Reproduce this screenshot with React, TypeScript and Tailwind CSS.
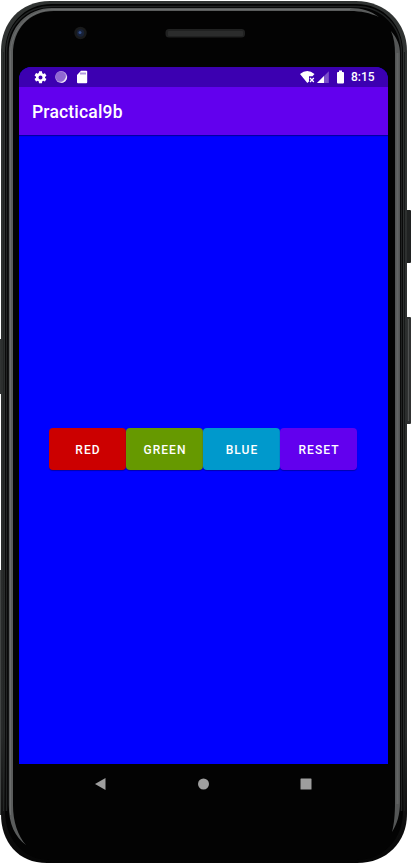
import React from "react";

function PhoneFrame() {
  return (
    <svg className="pointer-events-none absolute inset-0" width="411" height="863" viewBox="0 0 411 863" aria-hidden="true">
      <g fill="#303332">
        <rect x="0" y="339" width="3" height="55" />
        <rect x="0" y="570" width="3" height="245" fill="#414443" />
        <rect x="405" y="210" width="6" height="53" rx="1" fill="#202222" />
        <rect x="405" y="317" width="6" height="107" rx="1" fill="#303232" />
        <rect x="408" y="319" width="1" height="102" fill="#505252" />
      </g>
      <defs>
        <linearGradient id="rim" x1="0" y1="0" x2="0" y2="1">
          <stop offset="0" stopColor="#303332" />
          <stop offset="0.85" stopColor="#282a2a" />
          <stop offset="0.94" stopColor="#111" />
          <stop offset="1" stopColor="#050505" />
        </linearGradient>
      </defs>
      <path d="M1 51C1 23 20 1 50 1H356C386 1 407 23 407 51V814C407 842 387 863 357 863H47C18 863 1 842 1 814Z" fill="url(#rim)" />
      <path d="M5 53C5 25 24 4 52 4H356C384 4 403 25 403 53V811C403 839 384 860 356 860H50C23 860 5 839 5 811Z" fill="#030303" />
      <path d="M6.5 811V53C6.5 26 25 6.5 52 6.5H356C382 6.5 401.5 26 401.5 53V811" fill="none" stroke="#202222" strokeWidth="1.5" />
      <path d="M8.8 805V53C9 27 27 8 52 8H350C362 8 371 11 379 17C370 13 361 11 350 11H54C29 11 13 29 13 54V805C13 822 18 836 26 845C15 837 8.8 824 8.8 805Z" fill="#5a5c5c" />
      <path d="M10.5 815V55C10.5 29 29 9.5 54 9.5H350" fill="none" stroke="#6c6e6e" />
      <path d="M391 31C397 38 400 45 400 54V802C400 815 397 824 392 832C394 824 395 815 395 802V54C395 45 394 38 391 31Z" fill="#545656" />
      <path d="M397.5 53V804" stroke="#626464" strokeWidth="2" />
      <path d="M404.5 52V811" stroke="#171919" />
      <path d="M3.5 52V811" stroke="#222524" />
      <circle cx="80.5" cy="33" r="6.2" fill="#191a1b" />
      <circle cx="80.5" cy="33" r="3.7" fill="#172137" />
      <circle cx="80" cy="32.4" r="1.5" fill="#344e88" />
      <rect x="165.5" y="29" width="79.5" height="8.5" rx="3.5" fill="#202121" />
      <rect x="168" y="31" width="75" height="5" rx="1" fill="#2b2c2c" />
    </svg>
  );
}

function StatusBar() {
  return (
    <div className="flex h-5 shrink-0 items-center bg-[#3c00b1] pl-[14px] pr-[13px] text-white">
      <svg width="15" height="15" viewBox="0 0 24 24" fill="currentColor">
        <path fillRule="evenodd" d="M19.14 12.94c.04-.3.06-.61.06-.94s-.02-.64-.07-.94l2.03-1.58a.5.5 0 0 0 .12-.61l-1.92-3.32a.49.49 0 0 0-.59-.22l-2.39.96a7 7 0 0 0-1.62-.94l-.36-2.54A.48.48 0 0 0 13.92 2h-3.84a.48.48 0 0 0-.48.41l-.36 2.54c-.59.24-1.13.57-1.62.94l-2.39-.96a.48.48 0 0 0-.59.22L2.72 8.47a.48.48 0 0 0 .12.61l2.03 1.58a6 6 0 0 0-.02 1.88l-2.03 1.58a.5.5 0 0 0-.12.61l1.92 3.32c.12.22.37.29.59.22l2.39-.96c.5.38 1.03.7 1.62.94l.36 2.54c.05.24.24.41.48.41h3.84c.24 0 .44-.17.48-.41l.36-2.54a7 7 0 0 0 1.62-.94l2.39.96c.22.08.47 0 .59-.22l1.92-3.32a.48.48 0 0 0-.12-.61zM12 15.2A3.2 3.2 0 1 1 12 8.8a3.2 3.2 0 0 1 0 6.4Z" />
      </svg>
      <svg className="ml-[6px]" width="14" height="14" viewBox="0 0 14 14">
        <circle cx="7.2" cy="7" r="6" fill="#b79ae2" />
        <circle cx="6.7" cy="6.6" r="5" fill="#9068d2" />
        <path d="M12.8 5A6 6 0 0 1 6 12.7Q11 11.5 12.8 5Z" fill="#eee5f8" />
      </svg>
      <svg className="ml-[9px]" width="11" height="14" viewBox="0 0 11 14" fill="white">
        <path d="M4 .8H9.2Q10.2 .8 10.2 1.8V12.2Q10.2 13.2 9.2 13.2H1Q0 13.2 0 12.2V5Z" />
        <path d="M4 2.5V4.5M6 2.5V4.5M8 2.5V4.5" stroke="#3c00b1" strokeWidth=".8" />
      </svg>
      <svg className="ml-auto" width="17" height="14" viewBox="0 0 17 14" fill="white">
        <path d="M0 4Q7.2-1.8 14.5 4L12.5 6.3H9V11.5L7.3 13Z" />
        <path d="m10 8 3.8 4m0-4-3.8 4" stroke="white" strokeWidth="1.3" />
      </svg>
      <svg width="12" height="14" viewBox="0 0 12 14">
        <path d="M0 13 11.8 1.2V13Z" fill="#7b50ca" />
        <path d="M0 13 7 6V13Z" fill="white" />
      </svg>
      <svg className="ml-[8px]" width="7" height="14" viewBox="0 0 7 14" fill="white">
        <path d="M2 .5H5V2H6Q7 2 7 3V12.5Q7 13.5 6 13.5H1Q0 13.5 0 12.5V3Q0 2 1 2H2Z" />
      </svg>
      <span className="ml-[7px] w-6 whitespace-nowrap text-[12px] font-medium leading-5">8:15</span>
    </div>
  );
}

const buttons = [
  { label: "RED", color: "bg-[#cc0000]" },
  { label: "GREEN", color: "bg-[#669900]" },
  { label: "BLUE", color: "bg-[#0099cc]" },
  { label: "RESET", color: "bg-[#6200ee]" },
];

export default function App() {
  return (
    <div className="relative h-[863px] w-[411px] overflow-hidden bg-white font-[Roboto,sans-serif]">
      <PhoneFrame />
      <main className="relative ml-[19px] flex h-full w-[369px] flex-col pt-[67px]">
        <div className="flex h-[697px] flex-col overflow-hidden rounded-t-[12px] bg-[#0000ff]">
          <StatusBar />
          <header className="flex h-12 shrink-0 items-center bg-[#6200ee] pl-[13px] pt-[3px] text-[17.5px] font-medium tracking-[0.18px] text-white shadow-[0_1px_1px_#0000a8]">
            <h1>Practical9b</h1>
          </header>
          <section className="flex flex-1 items-center justify-center pb-px pr-[1px]">
            {buttons.map(({ label, color }) => (
              <button key={label} className={`h-[42px] w-[77px] rounded-[4px] pl-px pt-px text-[12px] font-medium tracking-[1.03px] text-white shadow-[0_1px_1px_#0000b0] ${color}`}>
                {label}
              </button>
            ))}
          </section>
        </div>
        <nav className="flex h-10 items-center justify-between pl-[76px] pr-[76px]">
          <svg width="12" height="12" viewBox="0 0 12 12" fill="#9e9e9e"><path d="M0 6 10.5 0V12Z" /></svg>
          <svg width="12" height="12" viewBox="0 0 12 12"><circle cx="5.5" cy="6" r="5.5" fill="#9e9e9e" /></svg>
          <svg width="12" height="12" viewBox="0 0 12 12"><rect x=".5" y=".5" width="11" height="11" rx=".6" fill="#9e9e9e" /></svg>
        </nav>
      </main>
    </div>
  );
}
